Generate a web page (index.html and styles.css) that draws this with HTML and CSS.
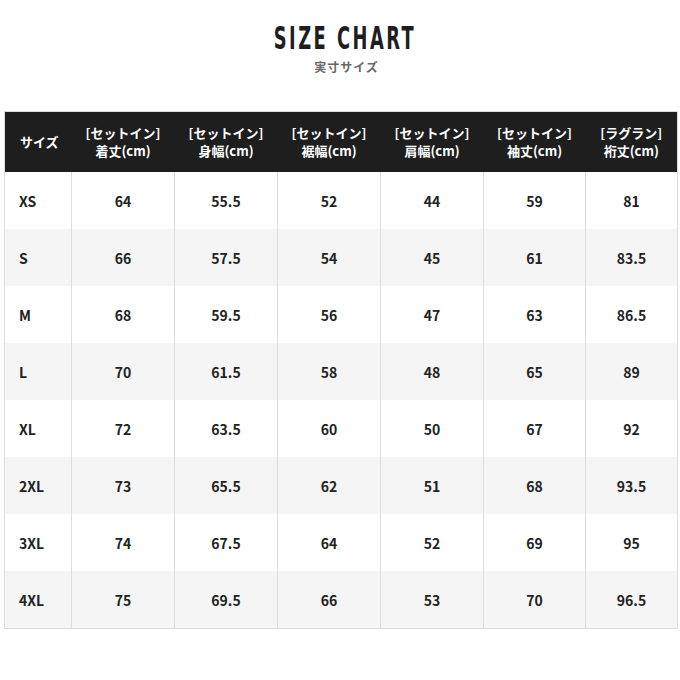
FILE: index.html
```html
<!DOCTYPE html>
<html lang="ja">
<head>
<meta charset="utf-8">
<link rel="stylesheet" href="styles.css">
</head>
<body>
<div class="page">
  <header class="heading">
    <h1 class="title"><span class="title-text">SIZE CHART</span></h1>
    <p class="subtitle">実寸サイズ</p>
  </header>
  <table class="chart">
    <colgroup>
      <col class="c-size"><col class="c-std"><col class="c-std"><col class="c-std"><col class="c-std"><col class="c-std2"><col class="c-last">
    </colgroup>
    <thead>
      <tr>
        <th class="first">サイズ</th>
        <th>[セットイン]<br>着丈(cm)</th>
        <th>[セットイン]<br>身幅(cm)</th>
        <th>[セットイン]<br>裾幅(cm)</th>
        <th>[セットイン]<br>肩幅(cm)</th>
        <th>[セットイン]<br>袖丈(cm)</th>
        <th>[ラグラン]<br>裄丈(cm)</th>
      </tr>
    </thead>
    <tbody>
      <tr><td class="first">XS</td><td>64</td><td>55.5</td><td>52</td><td>44</td><td>59</td><td>81</td></tr>
      <tr><td class="first">S</td><td>66</td><td>57.5</td><td>54</td><td>45</td><td>61</td><td>83.5</td></tr>
      <tr><td class="first">M</td><td>68</td><td>59.5</td><td>56</td><td>47</td><td>63</td><td>86.5</td></tr>
      <tr><td class="first">L</td><td>70</td><td>61.5</td><td>58</td><td>48</td><td>65</td><td>89</td></tr>
      <tr><td class="first">XL</td><td>72</td><td>63.5</td><td>60</td><td>50</td><td>67</td><td>92</td></tr>
      <tr><td class="first">2XL</td><td>73</td><td>65.5</td><td>62</td><td>51</td><td>68</td><td>93.5</td></tr>
      <tr><td class="first">3XL</td><td>74</td><td>67.5</td><td>64</td><td>52</td><td>69</td><td>95</td></tr>
      <tr><td class="first">4XL</td><td>75</td><td>69.5</td><td>66</td><td>53</td><td>70</td><td>96.5</td></tr>
    </tbody>
  </table>
</div>
</body>
</html>
```
FILE: styles.css
```css
html, body {
  margin: 0;
  padding: 0;
  background: #ffffff;
}
body {
  font-family: "Noto Sans CJK JP", "Noto Sans", sans-serif;
  color: #222;
}
.page {
  padding: 19px 3px 0 4px;
}
.heading {
  text-align: center;
  margin-bottom: 35px;
}
.title {
  margin: 0;
  padding-left: 9px;
  font-family: "DejaVu Sans", sans-serif;
  font-stretch: condensed;
  font-weight: 700;
  font-size: 32px;
  line-height: 39px;
  color: #1e1e1e;
}
.title-text {
  display: inline-block;
  letter-spacing: 4px;
  transform: scaleX(0.62);
}
.subtitle {
  margin: 0;
  padding-left: 12px;
  font-size: 12px;
  font-weight: 700;
  line-height: 18px;
  color: #666;
  letter-spacing: 1px;
}
.chart {
  width: 673px;
  table-layout: fixed;
  border-collapse: collapse;
  border: 1px solid #dcdcdc;
}
.c-size { width: 67px; }
.c-std { width: 103px; }
.c-std2 { width: 102px; }
.c-last { width: 92px; }
.chart th {
  background: #1e1e1e;
  color: #fff;
  font-size: 13px;
  font-weight: 700;
  line-height: 18px;
  height: 60px;
  padding: 0;
  text-align: center;
  border: none;
}
.chart td {
  height: 57px;
  padding: 0;
  font-size: 14px;
  font-weight: 700;
  text-align: center;
  border-left: 1px solid #dcdcdc;
  color: #222;
}
.chart .first {
  text-align: left;
  padding-left: 14px;
}
.chart th.first { padding-left: 15px; }
.chart td.first { border-left: none; }
.chart tbody tr:nth-child(even) td {
  background: #f5f5f5;
}
```
